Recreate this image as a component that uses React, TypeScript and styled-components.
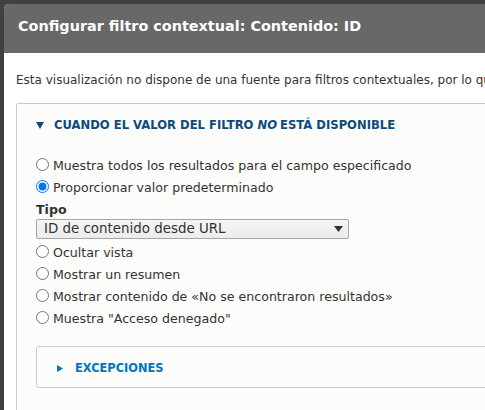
import React from "react";
import styled, { createGlobalStyle } from "styled-components";

const GlobalStyle = createGlobalStyle`
  html, body { margin: 0; padding: 0; }
  body {
    background: #404040;
    font-family: "DejaVu Sans", Verdana, sans-serif;
    overflow: hidden;
  }
`;

const Screen = styled.div`
  height: 410px;
  box-sizing: border-box;
  padding: 4px 0 0 4px;
  overflow: hidden;
`;

const Dialog = styled.div`
  width: 600px;
  height: 406px;
  background: #fff;
  border-radius: 5px 5px 0 0;
  overflow: hidden;
`;

const TitleBar = styled.div`
  height: 49px;
  box-sizing: border-box;
  padding: 14px 14px 0;
  background: #686868;
`;

const Title = styled.h1`
  margin: 0;
  font-size: 14.4px;
  line-height: 16px;
  font-weight: 700;
  color: #fff;
  white-space: nowrap;
`;

const Content = styled.div`
  padding: 19px 0 0 12px;
`;

const Description = styled.p`
  margin: 0 0 15px;
  font-size: 12px;
  line-height: 16px;
  color: #333;
  white-space: nowrap;
`;

const Details = styled.details<{ $outer?: boolean }>`
  border: 1px solid #ccc;
  border-radius: ${(p) => (p.$outer ? "2px" : "3px")};
  background: #fcfcfa;
  min-height: ${(p) => (p.$outer ? "400px" : "0")};
  margin: ${(p) => (p.$outer ? "0" : "16px 0 0")};
`;

const Summary = styled.summary<{ $outer?: boolean }>`
  display: flex;
  align-items: center;
  list-style: none;
  cursor: pointer;
  padding: ${(p) => (p.$outer ? "13px 19px 13px" : "13px 20px 11px")};
  font-size: ${(p) => (p.$outer ? "11.6px" : "11.4px")};
  line-height: 16px;
  font-weight: 700;
  text-transform: uppercase;
  white-space: nowrap;
  color: ${(p) => (p.$outer ? "#0f4a7c" : "#0074bd")};
  &::-webkit-details-marker { display: none; }
  em { font-style: italic; margin-right: -1px; }
`;

const Marker = styled.svg<{ $gap: number }>`
  flex: none;
  margin-right: ${(p) => p.$gap}px;
  fill: currentColor;
`;

const Body = styled.div`
  padding: 9px 19px 0;
`;

const Option = styled.label`
  display: flex;
  align-items: flex-start;
  height: 22px;
  font-size: 12.6px;
  line-height: 22px;
  color: #333;
  white-space: nowrap;
`;

const Radio = styled.input.attrs({ type: "radio" })`
  flex: none;
  width: 13px;
  height: 13px;
  margin: 3px 4px 0 0;
`;

const FieldLabel = styled.div`
  margin-top: 3px;
  font-size: 12.6px;
  line-height: 16px;
  font-weight: 700;
  color: #333;
`;

const SelectWrap = styled.div`
  position: relative;
  width: 313px;
  margin: 1px 0 3px;
`;

const Select = styled.select`
  appearance: none;
  display: block;
  width: 100%;
  height: 20px;
  box-sizing: border-box;
  margin: 0;
  padding: 0 20px 0 7px;
  border: 1px solid #a6a6a6;
  border-radius: 2px;
  background: linear-gradient(#f5f5f5, #ececec);
  font-family: inherit;
  font-size: 13.4px;
  line-height: 18px;
  color: #333;
`;

const SelectArrow = styled.svg`
  position: absolute;
  right: 6px;
  top: 7px;
  fill: #333;
  pointer-events: none;
`;

const firstOptions = [
  { label: "Muestra todos los resultados para el campo especificado", checked: false },
  { label: "Proporcionar valor predeterminado", checked: true },
];

const moreOptions = [
  "Ocultar vista",
  "Mostrar un resumen",
  "Mostrar contenido de «No se encontraron resultados»",
  'Muestra "Acceso denegado"',
];

export default function App() {
  return (
    <>
      <GlobalStyle />
      <Screen>
        <Dialog>
          <TitleBar>
            <Title>Configurar filtro contextual: Contenido: ID</Title>
          </TitleBar>
          <Content>
            <Description>
              Esta visualización no dispone de una fuente para filtros contextuales, por lo que no se pueden configurar.
            </Description>
            <Details $outer open>
              <Summary $outer>
                <Marker $gap={10} width="8" height="7" viewBox="0 0 8 7">
                  <polygon points="0,0 8,0 4,7" />
                </Marker>
                <span>
                  Cuando el valor del filtro <em>no</em> está disponible
                </span>
              </Summary>
              <Body>
                {firstOptions.map((o) => (
                  <Option key={o.label}>
                    <Radio name="default_action" defaultChecked={o.checked} />
                    {o.label}
                  </Option>
                ))}
                <FieldLabel>Tipo</FieldLabel>
                <SelectWrap>
                  <Select defaultValue="node">
                    <option value="node">ID de contenido desde URL</option>
                  </Select>
                  <SelectArrow width="9" height="6" viewBox="0 0 9 6">
                    <polygon points="0,0 9,0 4.5,6" />
                  </SelectArrow>
                </SelectWrap>
                {moreOptions.map((label) => (
                  <Option key={label}>
                    <Radio name="default_action" />
                    {label}
                  </Option>
                ))}
                <Details>
                  <Summary>
                    <Marker $gap={12} width="6" height="7" viewBox="0 0 6 7">
                      <polygon points="0,0 6,3.5 0,7" />
                    </Marker>
                    <span>Excepciones</span>
                  </Summary>
                </Details>
              </Body>
            </Details>
          </Content>
        </Dialog>
      </Screen>
    </>
  );
}
